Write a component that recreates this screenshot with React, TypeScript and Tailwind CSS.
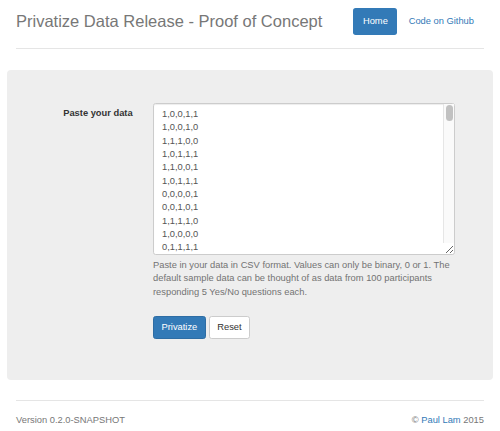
const seed = [
  '1,0,0,1,1',
  '1,0,0,1,0',
  '1,1,1,0,0',
  '1,0,1,1,1',
  '1,1,0,0,1',
  '1,0,1,1,1',
  '0,0,0,0,1',
  '0,0,1,0,1',
  '1,1,1,1,0',
  '1,0,0,0,0',
  '0,1,1,1,1',
];

// rest of the 100 sample rows, deterministic
let s = 7;
const rest: string[] = [];
for (let i = seed.length; i < 100; i++) {
  const row: number[] = [];
  for (let j = 0; j < 5; j++) {
    s = (s * 1103515245 + 12345) % 2147483648;
    row.push(s % 7 < 4 ? 1 : 0);
  }
  rest.push(row.join(','));
}
const sampleData = [...seed, ...rest].join('\n');

export default function App() {
  return (
    <div className="min-h-[431px] bg-white text-[#333] font-['Liberation_Sans',Arial,sans-serif] text-[9.33px] leading-[13.33px]">
      <div className="mx-auto max-w-[486.67px] pt-[8px]">
        {/* Header */}
        <div className="mx-[9.33px] flex items-center justify-between border-b border-[#e5e5e5] pb-[13.33px]">
          <h3 className="text-[16.5px] leading-[26.67px] text-[#777]">
            Privatize Data Release - Proof of Concept
          </h3>
          <nav className="flex items-center gap-[1.33px]">
            <a className="rounded-[2.67px] bg-[#337ab7] px-[9.5px] leading-[26.67px] text-white">
              Home
            </a>
            <a className="rounded-[2.67px] px-[10px] leading-[26.67px] text-[#337ab7]">
              Code on Github
            </a>
          </nav>
        </div>

        {/* Jumbotron */}
        <div className="mt-[21px] h-[310px] rounded-[4px] bg-[#eee] pt-[32.67px]">
          <div className="flex">
            <label className="w-[126px] shrink-0 pt-[4.67px] text-right font-bold">
              Paste your data
            </label>
            <div className="ml-[20.33px] w-[302px]">
              <div className="relative">
                <textarea
                  defaultValue={sampleData}
                  spellCheck={false}
                  className="block h-[152px] w-full rounded-[2.67px] border border-[#ccc] bg-white pl-[8px] pr-[14px] pt-[4.5px] pb-[4px] text-[9.33px] leading-[13.33px] text-[#555] shadow-[inset_0_1px_1px_rgba(0,0,0,0.075)] outline-none"
                />
                {/* scrollbar */}
                <div className="pointer-events-none absolute top-[1px] right-[1px] bottom-[12px] w-[11px] border-l border-[#e6e6e6] bg-[#fafafa] pt-[1px]">
                  <div className="mx-auto h-[16px] w-[7px] rounded-full bg-[#c1c1c1]" />
                </div>
              </div>
              <p className="mt-[4.5px] text-[#737373]">
                Paste in your data in CSV format. Values can only be binary, 0
                or 1. The default sample data can be thought of as data from 100
                participants responding 5 Yes/No questions each.
              </p>
              <div className="mt-[17px] flex gap-[3.5px]">
                <button className="h-[22.67px] rounded-[2.67px] border border-[#2e6da4] bg-[#337ab7] px-[7.5px] text-white">
                  Privatize
                </button>
                <button className="h-[22.67px] rounded-[2.67px] border border-[#ccc] bg-white px-[7px] text-[#333]">
                  Reset
                </button>
              </div>
            </div>
          </div>
        </div>

        {/* Footer */}
        <div className="mx-[9.33px] mt-[20px] flex justify-between border-t border-[#e5e5e5] pt-[12.67px] text-[#777]">
          <span>Version 0.2.0-SNAPSHOT</span>
          <span>
            © <a className="text-[#337ab7]">Paul Lam</a> 2015
          </span>
        </div>
      </div>
    </div>
  );
}
